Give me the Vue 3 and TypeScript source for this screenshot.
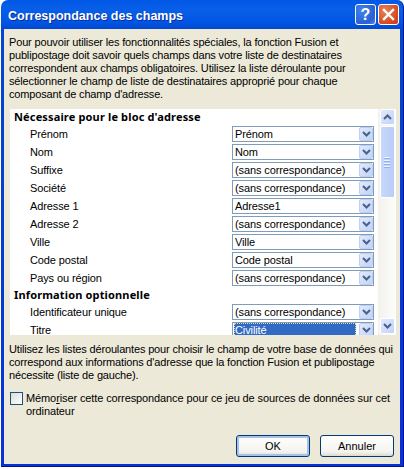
<script setup lang="ts">
interface Row { label: string; value: string; active?: boolean }
const required: Row[] = [
  { label: 'Prénom', value: 'Prénom' },
  { label: 'Nom', value: 'Nom' },
  { label: 'Suffixe', value: '(sans correspondance)' },
  { label: 'Société', value: '(sans correspondance)' },
  { label: 'Adresse 1', value: 'Adresse1' },
  { label: 'Adresse 2', value: '(sans correspondance)' },
  { label: 'Ville', value: 'Ville' },
  { label: 'Code postal', value: 'Code postal' },
  { label: 'Pays ou région', value: '(sans correspondance)' },
]
const optional: Row[] = [
  { label: 'Identificateur unique', value: '(sans correspondance)' },
  { label: 'Titre', value: 'Civilité', active: true },
]
</script>

<template>
  <div class="window">
    <header class="titlebar">
      <span class="title">Correspondance des champs</span>
      <div class="controls">
        <button class="ctl help">?</button>
        <button class="ctl close">
          <svg width="13" height="13" viewBox="0 0 13 13"><path d="M2 2l9 9M11 2l-9 9" stroke="#fff" stroke-width="2.4" stroke-linecap="square" fill="none" /></svg>
        </button>
      </div>
    </header>
    <main class="body">
      <p class="intro">Pour pouvoir utiliser les fonctionnalités spéciales, la fonction Fusion et<br>publipostage doit savoir quels champs dans votre liste de destinataires<br>correspondent aux champs obligatoires. Utilisez la liste déroulante pour<br>sélectionner le champ de liste de destinataires approprié pour chaque<br>composant de champ d'adresse.</p>
      <section class="panel">
        <div class="list">
          <h3 class="heading">Nécessaire pour le bloc d'adresse</h3>
          <div v-for="r in required" :key="r.label" class="row">
            <span class="label">{{ r.label }}</span>
            <div class="select">
              <span class="value">{{ r.value }}</span>
              <span class="drop"><svg width="9" height="6" viewBox="0 0 9 6"><path d="M1 1l3.5 3.5L8 1" stroke="#4d6185" stroke-width="2" fill="none" /></svg></span>
            </div>
          </div>
          <h3 class="heading second">Information optionnelle</h3>
          <div v-for="r in optional" :key="r.label" class="row">
            <span class="label">{{ r.label }}</span>
            <div class="select" :class="{ active: r.active }">
              <span class="value">{{ r.value }}</span>
              <span class="drop"><svg width="9" height="6" viewBox="0 0 9 6"><path d="M1 1l3.5 3.5L8 1" stroke="#4d6185" stroke-width="2" fill="none" /></svg></span>
            </div>
          </div>
        </div>
        <div class="scrollbar">
          <span class="sbtn"><svg width="9" height="6" viewBox="0 0 9 6"><path d="M1 5l3.5-3.5L8 5" stroke="#4d6185" stroke-width="2" fill="none" /></svg></span>
          <span class="thumb"><i></i><i></i><i></i><i></i></span>
          <span class="spacer"></span>
          <span class="sbtn"><svg width="9" height="6" viewBox="0 0 9 6"><path d="M1 1l3.5 3.5L8 1" stroke="#4d6185" stroke-width="2" fill="none" /></svg></span>
        </div>
      </section>
      <p class="outro">Utilisez les listes déroulantes pour choisir le champ de votre base de données qui<br>correspond aux informations d'adresse que la fonction Fusion et publipostage<br>nécessite (liste de gauche).</p>
      <label class="check">
        <span class="box"></span>
        <span class="check-text">Mémo<u>r</u>iser cette correspondance pour ce jeu de sources de données sur cet<br>ordinateur</span>
      </label>
      <footer class="actions">
        <button class="btn default">OK</button>
        <button class="btn">Annuler</button>
      </footer>
    </main>
  </div>
</template>

<style>
html, body { margin: 0; background: #fff; }
</style>

<style scoped>
.window {
  width: 403px;
  height: 467px;
  margin-left: 1px;
  box-sizing: border-box;
  display: flex;
  flex-direction: column;
  font-family: "Liberation Sans", sans-serif;
  font-size: 11px;
  color: #000;
  background: linear-gradient(#0058e6, #0a5fe8 10px, #0055e5 22px, #0347cc 30px, #0831d9);
  border-right: 1px solid #00138c;
  border-bottom: 1px solid #00138c;
  border-radius: 7px 7px 0 0;
}
.titlebar {
  height: 29px;
  flex: none;
  display: flex;
  align-items: center;
  justify-content: space-between;
  padding: 0 4px 0 7px;
}
.title {
  color: #fff;
  font-family: "Liberation Sans", sans-serif;
  font-weight: 700;
  font-size: 12.5px;
  text-shadow: 1px 1px #0f2f8f;
  padding-top: 2px;
}
.controls { display: flex; gap: 2px; }
.ctl {
  width: 21px;
  height: 21px;
  padding: 0;
  box-sizing: border-box;
  border: 1px solid #fff;
  border-radius: 3px;
  display: flex;
  align-items: center;
  justify-content: center;
  color: #fff;
  font: 700 16px "Liberation Sans", sans-serif;
}
.help { background: radial-gradient(circle at 30% 30%, #3f82ee, #2a5fd0 70%, #5a86e4); }
.close { background: radial-gradient(circle at 30% 30%, #e8805a, #d6491f 70%, #c83c12); }
.body {
  flex: 1;
  margin: 0 3px 2px 3px;
  background: #ece9d8;
  padding: 7px 4px 0 6px;
  display: flex;
  flex-direction: column;
  min-height: 0;
  letter-spacing: -0.11px;
}
.intro, .outro { margin: 0 0 0 -1px; line-height: 13px; white-space: nowrap; letter-spacing: -0.16px; }
.intro { height: 73px; }
.panel {
  flex: none;
  height: 226px;
  display: flex;
  overflow: hidden;
  background: #fff;
}
.list { width: 368px; flex: none; padding: 1px 0 0 4px; box-sizing: border-box; }
.heading {
  margin: 0;
  height: 14px;
  line-height: 14px;
  font-family: "Noto Sans", sans-serif;
  font-size: 11px;
  letter-spacing: 0.15px;
  font-weight: 700;
}
.heading.second { margin-top: 2px; }
.row {
  display: flex;
  align-items: center;
  justify-content: space-between;
  height: 16px;
  margin-top: 2px;
  padding-left: 16px;
  padding-right: 4px;
}
.select {
  width: 142px;
  height: 16px;
  box-sizing: border-box;
  border: 1px solid #7f9db9;
  display: flex;
  align-items: center;
  justify-content: space-between;
  background: #fff;
  padding-left: 2px;
}
.select.active .value {
  background: #316ac5;
  color: #fff;
  width: 122px;
  margin-left: -1px;
  padding-left: 1px;
  outline: 1px dotted #e8d9a0;
  outline-offset: -1px;
  height: 14px;
  line-height: 14px;
  box-sizing: border-box;
}
.drop {
  width: 14px;
  height: 14px;
  flex: none;
  box-sizing: border-box;
  border: 1px solid #bdd0f4;
  border-radius: 2px;
  background: linear-gradient(135deg, #e1eafe, #c1d3fb);
  display: flex;
  align-items: center;
  justify-content: center;
}
.scrollbar {
  width: 18px;
  flex: none;
  display: flex;
  flex-direction: column;
  align-items: center;
  padding: 0 0 1px;
  box-sizing: border-box;
  gap: 1px;
  background: linear-gradient(90deg, #f3f1ec, #fdfdfa);
}
.sbtn {
  width: 15px;
  height: 16px;
  flex: none;
  box-sizing: border-box;
  border: 1px solid #fff;
  border-radius: 2px;
  background: linear-gradient(135deg, #e1eafe, #c1d3fb);
  display: flex;
  align-items: center;
  justify-content: center;
}
.thumb {
  width: 15px;
  height: 72px;
  flex: none;
  box-sizing: border-box;
  border: 1px solid #fff;
  border-radius: 2px;
  background: linear-gradient(90deg, #c9d7fb, #b7cdf8);
  display: flex;
  flex-direction: column;
  align-items: center;
  justify-content: center;
  gap: 1px;
}
.thumb i { display: block; width: 6px; height: 1px; background: #eef3fe; box-shadow: 0 1px #8cb0f8; margin-bottom: 1px; }
.spacer { flex: 1; }
.outro { margin-top: 8px; }
.check {
  display: flex;
  gap: 3px;
  margin-top: 9px;
  line-height: 13px;
}
.box {
  width: 11px;
  height: 11px;
  flex: none;
  border: 1px solid #1c5180;
  background: linear-gradient(135deg, #dcdcd7, #fff);
  margin-top: 1px;
}
.check-text { white-space: nowrap; padding-top: 1px; }
.actions {
  margin-top: auto;
  margin-bottom: 7px;
  display: flex;
  justify-content: flex-end;
  gap: 10px;
  padding-right: 2px;
}
.btn {
  width: 74px;
  height: 22px;
  padding: 0;
  box-sizing: border-box;
  border: 1px solid #003c74;
  border-radius: 3px;
  background: linear-gradient(#fff, #f4f3ee 80%, #dcd8ce);
  font: inherit;
  color: #000;
}
.btn.default { box-shadow: inset 0 0 0 2px #a9c1ea; }
</style>
